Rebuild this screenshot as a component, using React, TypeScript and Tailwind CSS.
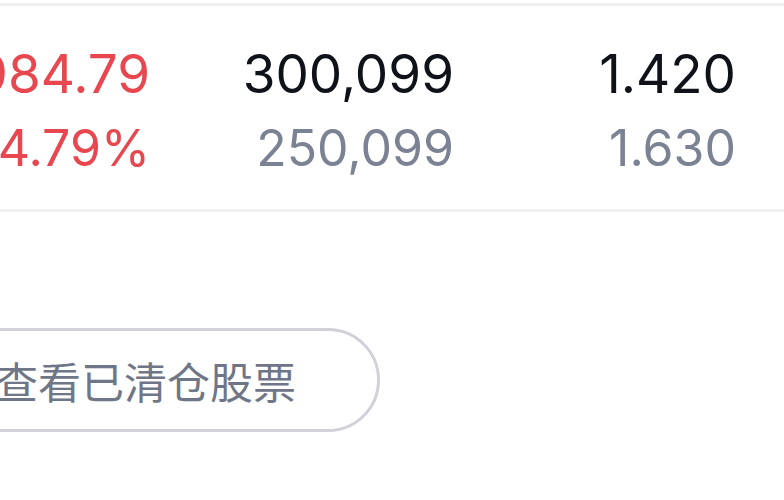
import React from 'react';

interface Cell {
  top: string;
  bottom: string;
  topClass: string;
  bottomClass: string;
  width: string;
}

const CELLS: Cell[] = [
  { top: '1,984.79', bottom: '+4.79%', topClass: 'text-[#e8474f]', bottomClass: 'text-[#e8474f]', width: 'w-[300px]' },
  { top: '300,099', bottom: '250,099', topClass: 'text-[#101219]', bottomClass: 'text-[#7b8294]', width: 'w-[304px]' },
  { top: '1.420', bottom: '1.630', topClass: 'text-[#101219]', bottomClass: 'text-[#7b8294]', width: 'w-[282px]' },
];

const App: React.FC = () => {
  return (
    <div className="w-[784px] h-[500px] overflow-hidden bg-white font-['Inter','Noto_Sans_CJK_SC',sans-serif]">
      {/* holdings summary row, page is cropped on the left */}
      <div className="mt-[3px] h-[209px] border-y-[3px] border-[#f0f0f2] bg-white flex justify-end pr-[48px]">
        {CELLS.map(c => (
          <div key={c.top} className={`${c.width} shrink-0 flex flex-col items-end text-right pt-[31px]`}>
            <div className={`text-[53px] leading-[74px] whitespace-nowrap ${c.topClass}`}>{c.top}</div>
            <div className={`text-[50px] leading-[74px] whitespace-nowrap ${c.bottomClass}`}>{c.bottom}</div>
          </div>
        ))}
      </div>

      <div className="mt-[116px] -ml-[89px] flex">
        <button
          type="button"
          className="h-[104px] w-[469px] rounded-full border-[3px] border-[#d0d1d9] bg-white flex items-center justify-center text-[43px] text-[#6f7687] font-['Noto_Sans_CJK_SC',sans-serif]"
        >
          查看已清仓股票
        </button>
      </div>
    </div>
  );
};

export default App;
